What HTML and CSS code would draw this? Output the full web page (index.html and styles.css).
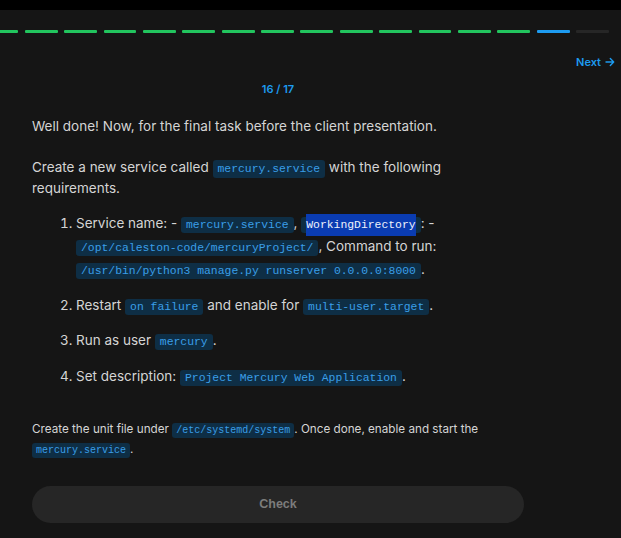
FILE: index.html
```html
<!DOCTYPE html>
<html lang="en">
<head>
<meta charset="utf-8">
<title>Task 16 / 17</title>
<link rel="stylesheet" href="styles.css">
</head>
<body>
<div class="topbar"></div>
<div class="progress">
  <span class="dash done"></span><span class="dash done"></span><span class="dash done"></span>
  <span class="dash done"></span><span class="dash done"></span><span class="dash done"></span>
  <span class="dash done"></span><span class="dash done"></span><span class="dash done"></span>
  <span class="dash done"></span><span class="dash done"></span><span class="dash done"></span>
  <span class="dash done"></span><span class="dash done"></span><span class="dash done"></span>
  <span class="dash current"></span><span class="dash todo"></span>
</div>
<div class="nav">
  <a class="next" href="#">Next <svg class="arrow" width="10" height="10" viewBox="0 0 10 10"><path d="M1 5H8.5M5.3 1.6L8.7 5L5.3 8.4" fill="none" stroke="currentColor" stroke-width="1.4" stroke-linecap="round" stroke-linejoin="round"/></svg></a>
</div>
<div class="counter">16 / 17</div>
<main class="content">
  <p class="lead">Well done! Now, for the final task before the client presentation.</p>
  <p class="lead">Create a new service called <code class="chip">mercury.service</code> with the following requirements.</p>
  <ol class="steps">
    <li>Service name: - <code class="chip sm">mercury.service</code>, <code class="chip sm"><span class="sel">WorkingDirectory</span></code>: - <code class="chip sm">/opt/caleston-code/mercuryProject/</code>, Command to run: <code class="chip sm">/usr/bin/python3 manage.py runserver 0.0.0.0:8000</code>.</li>
    <li>Restart <code class="chip sm">on failure</code> and enable for <code class="chip sm">multi-user.target</code>.</li>
    <li>Run as user <code class="chip sm">mercury</code>.</li>
    <li>Set description: <code class="chip sm">Project Mercury Web Application</code>.</li>
  </ol>
  <p class="note">Create the unit file under <code class="chip xs">/etc/systemd/system</code>. Once done, enable and start the <code class="chip xs">mercury.service</code>.</p>
  <button class="check" type="button">Check</button>
</main>
</body>
</html>
```
FILE: styles.css
```css
html, body {
  margin: 0;
  padding: 0;
  background: #151515;
}
body {
  font-family: Inter, "Noto Sans", sans-serif;
  color: #d4d4d4;
  overflow: hidden;
}
.topbar {
  height: 10px;
  background: #000;
}
.progress {
  display: flex;
  gap: 6.4px;
  height: 3px;
  margin: 20px 12px 0 -54px;
}
.dash {
  flex: 1;
  border-radius: 1px;
}
.dash.done { background: #22c55e; }
.dash.current { background: #1d9bf0; }
.dash.todo { background: #262626; }
.nav {
  display: flex;
  justify-content: flex-end;
  margin-top: 22px;
  padding-right: 6px;
}
.next {
  display: flex;
  align-items: center;
  gap: 4px;
  color: #1d9bf0;
  font-size: 11px;
  font-weight: 600;
  line-height: 14px;
  text-decoration: none;
}
.counter {
  margin-top: 13px;
  width: 492px;
  margin-left: 32px;
  text-align: center;
  color: #1d9bf0;
  font-size: 11px;
  font-weight: 600;
  line-height: 14px;
}
.content {
  width: 492px;
  margin: 20px 0 0 32px;
}
.lead {
  margin: 0 0 20px;
  font-size: 13.5px;
  line-height: 21px;
}
.chip {
  font-family: "Liberation Mono", "DejaVu Sans Mono", monospace;
  font-size: 11.4px;
  line-height: 1;
  color: #3a9ee8;
  background: #0e2e45;
  border-radius: 3px;
  padding: 3px 5px;
}
.chip.sm {
  padding: 2px 5px;
}
.chip.xs {
  font-size: 10px;
  padding: 2px 4px;
}
.sel {
  background: #0a3cb2;
  color: #eef2fb;
  padding: 5px 0;
}
.steps {
  margin: -7px 0 0;
  padding-left: 44px;
  font-size: 13.5px;
  line-height: 23px;
}
.steps li {
  margin-bottom: 12.5px;
}
.note {
  margin: 31px 0 0;
  font-size: 11.7px;
  line-height: 20px;
}
.check {
  display: block;
  width: 492px;
  height: 37px;
  margin-top: 27px;
  border: none;
  border-radius: 19px;
  background: #262626;
  color: #7c7c7c;
  font-family: "Liberation Sans", Arial, sans-serif;
  font-size: 12.5px;
  font-weight: 700;
}
```
